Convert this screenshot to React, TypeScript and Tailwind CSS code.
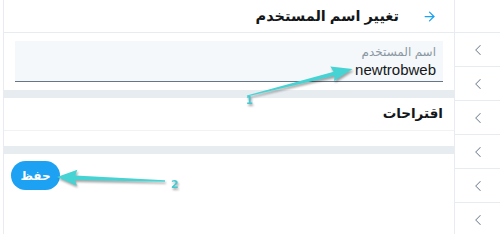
import { ArrowRight, ChevronLeft } from 'lucide-react'

const font = { fontFamily: '"Liberation Sans", "DejaVu Sans", sans-serif' }

function Annotations() {
  return (
    <svg
      className="absolute inset-0 pointer-events-none drop-shadow-[1px_2px_1px_rgba(0,0,0,0.35)]"
      width={500}
      height={234}
      viewBox="0 0 500 234"
    >
      <g transform="translate(247 96) rotate(-14.3)" fill="#46d3d3">
        <path d="M0 -0.6 L90 -2 L88 -8 L109 0 L88 7 L90 2 L0 0.6 Z" />
      </g>
      <g transform="translate(165 181) rotate(-177.9)" fill="#46d3d3">
        <path d="M0 -0.8 L90 -2.2 L88 -8 L108 0 L88 8 L90 2.2 L0 0.8 Z" />
      </g>
      <text x={246} y={104} fontSize={10} fontWeight={700} fill="#46c8d0" fontFamily="DejaVu Sans, sans-serif">1</text>
      <text x={171} y={188} fontSize={11} fontWeight={700} fill="#46c8d0" fontFamily="DejaVu Sans, sans-serif">2</text>
    </svg>
  )
}

export default function App() {
  const sideRows = [0, 1, 2, 3, 4, 5, 6]

  return (
    <div className="relative flex w-[500px] h-[234px] bg-white overflow-hidden" style={font}>
      <div dir="rtl" className="ml-[3px] w-[452px] h-full border-x border-[#e6ecf0] flex flex-col">
        <div className="h-[33px] shrink-0 border-b border-[#e6ecf0] flex items-center pr-[17px]">
          <ArrowRight size={15} strokeWidth={2} className="text-[#1da1f2]" />
          <h1 className="mr-[23px] text-[14.5px] font-bold text-[#14171a] leading-none">تغيير اسم المستخدم</h1>
        </div>

        <div className="px-[11px] pt-[8px] pb-[8px]">
          <div className="h-[41px] bg-[#f5f8fa] border-b-[1.5px] border-[#657786] px-[7px] pt-[4px]">
            <div className="text-[12px] text-[#8a97a3] leading-[15px]">اسم المستخدم</div>
            <div className="text-[15px] text-[#14171a] leading-[20px]">newtrobweb</div>
          </div>
        </div>

        <div className="h-[8px] bg-[#e6ecf0]" />

        <div className="h-[33px] border-b border-[#f0f3f5] flex items-center pr-[11px]">
          <span className="text-[13.5px] font-bold text-[#14171a]">اقتراحات</span>
        </div>
        <div className="h-[15px]" />
        <div className="h-[8px] bg-[#e6ecf0]" />

        <div className="flex justify-end pl-[7px] pt-[7px]">
          <button className="w-[49px] h-[29px] rounded-full bg-[#1da1f2] text-white text-[12px] font-bold">
            حفظ
          </button>
        </div>
      </div>

      <div className="flex-1 flex flex-col">
        {sideRows.map((i) => (
          <div
            key={i}
            className={`${i === 0 ? 'h-[33px]' : 'h-[34px]'} shrink-0 border-b border-[#e6ecf0] flex items-center justify-center`}
          >
            {i > 0 && <ChevronLeft size={18} strokeWidth={1.4} className="text-[#7a8a98]" />}
          </div>
        ))}
      </div>

      <Annotations />
    </div>
  )
}
